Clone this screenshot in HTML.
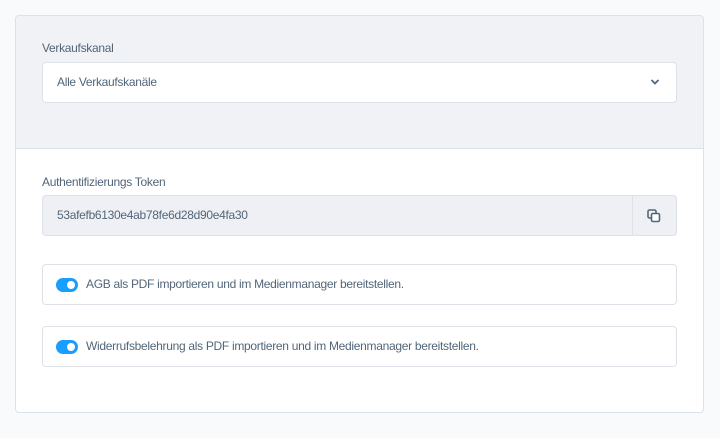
<!DOCTYPE html><html><head><style>
body{margin:0;width:720px;height:438px;background:#f9fafb;font-family:"Liberation Sans",sans-serif;color:#52667a;position:relative;overflow:hidden}
.card{position:absolute;left:15px;top:15px;width:687px;height:396px;border:1px solid #dde2e8;border-radius:4px;background:#fff;overflow:hidden}
.top{position:absolute;left:0;top:0;width:100%;height:132px;background:#f0f2f5;border-bottom:1px solid #dde2e8}
.lbl{position:absolute;left:26px;font-size:12px;color:#52667a;letter-spacing:-0.3px}
.box{position:absolute;left:26px;width:633px;height:39px;border:1px solid #dde2e8;border-radius:4px;font-size:12px;line-height:39px;letter-spacing:-0.3px}
.box span{position:absolute;left:14px}
.tog{position:absolute;left:13px;top:13px;width:22px;height:14px;border-radius:7px;background:#189eff}
.tog:after{content:"";position:absolute;right:3px;top:3px;width:8px;height:8px;border-radius:50%;background:#fff}
</style></head><body>
<div class="card">
<div class="top">
<div class="lbl" style="top:25px">Verkaufskanal</div>
<div class="box" style="top:46px;background:#fff"><span>Alle Verkaufskanäle</span>
<svg style="position:absolute;right:16px;top:15px" width="10" height="8" viewBox="0 0 10 8"><path d="M1.5 2l3.5 3.5L8.5 2" fill="none" stroke="#52667a" stroke-width="1.8"/></svg></div>
</div>
<div class="lbl" style="top:159px">Authentifizierungs Token</div>
<div class="box" style="top:179px;background:#eef0f3"><span>53afefb6130e4ab78fe6d28d90e4fa30</span>
<div style="position:absolute;right:0;top:0;width:43px;height:39px;border-left:1px solid #dde2e8"></div>
<svg style="position:absolute;right:15px;top:13px" width="14" height="14" viewBox="0 0 14 14"><rect x="1" y="1" width="8" height="8" rx="1.5" fill="none" stroke="#52667a" stroke-width="1.6"/><rect x="4.5" y="4.5" width="8" height="8" rx="1.5" fill="#fff" stroke="#52667a" stroke-width="1.6"/></svg></div>
<div class="box" style="top:248px;background:#fff"><div class="tog"></div><span style="left:43px">AGB als PDF importieren und im Medienmanager bereitstellen.</span></div>
<div class="box" style="top:310px;background:#fff"><div class="tog"></div><span style="left:43px">Widerrufsbelehrung als PDF importieren und im Medienmanager bereitstellen.</span></div>
</div>
</body></html>
